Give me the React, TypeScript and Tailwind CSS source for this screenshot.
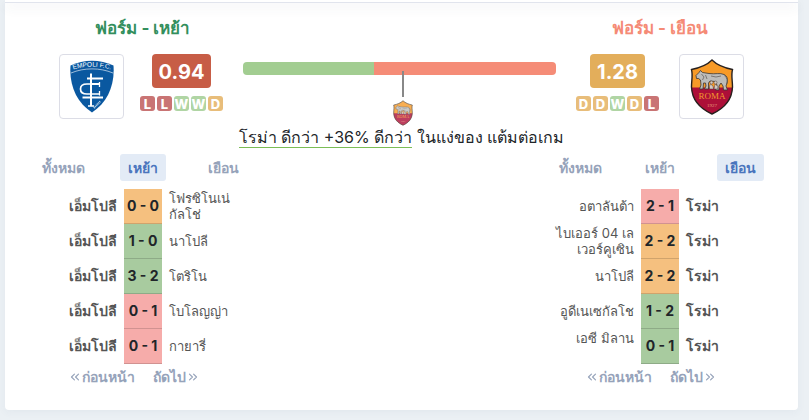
import { ChevronsLeft, ChevronsRight } from "lucide-react";

type Result = "W" | "D" | "L";

type Match = {
  home: string;
  away: string;
  score: string;
  result: Result;
};

const tabs = ["ทั้งหมด", "เหย้า", "เยือน"];

const homeMatches: Match[] = [
  { home: "เอ็มโปลี", away: "โฟรซิโนเน่\nกัลโช่", score: "0 - 0", result: "D" },
  { home: "เอ็มโปลี", away: "นาโปลี", score: "1 - 0", result: "W" },
  { home: "เอ็มโปลี", away: "โตริโน", score: "3 - 2", result: "W" },
  { home: "เอ็มโปลี", away: "โบโลญญ่า", score: "0 - 1", result: "L" },
  { home: "เอ็มโปลี", away: "กายารี่", score: "0 - 1", result: "L" },
];

const awayMatches: Match[] = [
  { home: "อตาลันต้า", away: "โรม่า", score: "2 - 1", result: "L" },
  { home: "ไบเออร์ 04 เล\nเวอร์คูเซิน", away: "โรม่า", score: "2 - 2", result: "D" },
  { home: "นาโปลี", away: "โรม่า", score: "2 - 2", result: "D" },
  { home: "อูดีเนเซกัลโช", away: "โรม่า", score: "1 - 2", result: "W" },
  { home: "เอซี มิลาน\n\u00a0", away: "โรม่า", score: "0 - 1", result: "W" },
];

const badgeColors: Record<Result, string> = {
  W: "bg-[#b0d5a4]",
  D: "bg-[#e8bd7a]",
  L: "bg-[#c97474]",
};

const scoreColors: Record<Result, string> = {
  W: "bg-[#a8cb9f] border-[#8eab87]",
  D: "bg-[#f5c07f] border-[#d0a36c]",
  L: "bg-[#f6acaa] border-[#d19291]",
};

function EmpoliCrest() {
  return (
    <svg viewBox="0 0 44 53" className="h-[53px] w-11" aria-label="Empoli">
      <path
        d="M0.5 5.5C14-1 30-1 43.5 5.5C45 26 37 43 22 52.5C7 43-1 26 0.5 5.5Z"
        fill="#0a58a0"
      />
      <path d="M1 13C14 7.5 30 7.5 43 13" fill="none" stroke="#dce8f3" strokeWidth="0.7" />
      <path id="empoli-arc" d="M2 10C15 5.5 29 5.5 42 10" fill="none" />
      <text fill="#fff" fontSize="6.5" fontFamily="Liberation Sans, sans-serif">
        <textPath href="#empoli-arc" startOffset="50%" textAnchor="middle">
          EMPOLI F.C.
        </textPath>
      </text>
      <g fill="none" stroke="#fff">
        <path d="M21 13.5V46" strokeWidth="2" />
        <path d="M17 18.5H33M21 24H29.5M12.5 37.5H33" strokeWidth="1.8" />
        <path d="M29.5 22V27M29.5 31V35.5M18 46H24" strokeWidth="1.3" />
        <path d="M29.5 24H17Q10.5 24 10.5 29Q10.5 34 17 34H29.5" strokeWidth="1.7" />
      </g>
      <path d="M24 48L30.5 41" stroke="#b7d1e7" strokeWidth="2" strokeDasharray="1 0.6" />
    </svg>
  );
}

function RomaCrest({ className }: { className: string }) {
  return (
    <svg viewBox="0 0 44 56" className={className} aria-label="Roma">
      <path
        d="M22 1C17 6 9 9 1.5 10.5C3 16 1.5 21 1.5 28C2 42 11 50 22 55C33 50 42 42 42.5 28C42.5 21 41 16 42.5 10.5C35 9 27 6 22 1Z"
        fill="#f79a27"
      />
      <path d="M1.5 28.5H42.5C42 42 33 50 22 55C11 50 2 42 1.5 28.5Z" fill="#ad0f38" />
      <path
        d="M22 1C17 6 9 9 1.5 10.5C3 16 1.5 21 1.5 28C2 42 11 50 22 55C33 50 42 42 42.5 28C42.5 21 41 16 42.5 10.5C35 9 27 6 22 1Z"
        fill="none"
        stroke="#28211f"
        strokeWidth="1.4"
      />
      {/* she-wolf */}
      <path
        d="M6 16.5L9 13.5L10.5 11.5L12.5 13.5L19 14.5C25 15.5 30 13.5 34 15.5C37.5 17 38 21 37 24L36 27L37.5 31H33.5L33 27L31 24L29 27V31H25.5L27 26L25 22.5L20 22L18.5 24V30H14.5L16 27L15.5 24L13.5 24L13 30H9.5L11 26L10.5 21L8.5 19.5H6.5Z"
        fill="#bdbcba"
        stroke="#3a3532"
        strokeWidth="0.8"
        strokeLinejoin="round"
      />
      <path
        d="M11.5 15L14 18L12.5 21M15.5 16L17 20M34.5 16.5Q38.5 20 36.5 26M21 17Q26 19 31 17"
        fill="none"
        stroke="#5d5855"
        strokeWidth="0.7"
      />
      {/* twins */}
      <g fill="#d3cac3" stroke="#51413d" strokeWidth="0.5">
        <circle cx="21.5" cy="23.5" r="1.5" />
        <circle cx="25.5" cy="23.5" r="1.5" />
        <path d="M20.5 25L23 27L23.5 30H19.5V27ZM25 25L28 27.5L27.5 30H24Z" />
      </g>
      <text x="22" y="39.5" textAnchor="middle" fontSize="9" fill="#f39a2d" fontFamily="Liberation Serif, serif">
        ROMA
      </text>
      <text x="22" y="47.5" textAnchor="middle" fontSize="5" fill="#e8a07f" fontFamily="Liberation Serif, serif">
        1927
      </text>
    </svg>
  );
}

function CrestBox({ children }: { children: React.ReactNode }) {
  return (
    <div className="flex h-[65px] w-[65px] shrink-0 items-center justify-center rounded border border-[#dcdde6] bg-white">
      {children}
    </div>
  );
}

function PointsPerGame({ value, form, color }: { value: string; form: Result[]; color: string }) {
  return (
    <div className="flex shrink-0 flex-col items-center gap-2">
      <div className={`rounded px-[7px] text-xl leading-[36px] h-[34px] font-bold text-white ${color}`}>{value}</div>
      <div className="flex gap-0.5">
        {form.map((result, i) => (
          <span
            key={i}
            className={`h-[15px] w-[15px] rounded-[3px] text-center text-[13px] leading-[16px] font-extrabold text-white ${badgeColors[result]}`}
          >
            {result}
          </span>
        ))}
      </div>
    </div>
  );
}

function FormTable({ matches, active, side }: { matches: Match[]; active: number; side: "home" | "away" }) {
  const homeText = side === "home" ? "text-sm font-bold" : "text-[13px]";
  const awayText = side === "away" ? "text-sm font-bold" : "text-[13px]";

  return (
    <section className="w-[276px]">
      <div className="mx-auto grid w-60 grid-cols-3 justify-items-center">
        {tabs.map((tab, i) => (
          <button
            key={tab}
            type="button"
            className={
              i === active
                ? "h-[27px] rounded-[3px] bg-[#e3ebf6] px-2 text-sm font-bold text-[#4a75bd]"
                : "h-[27px] px-2 text-sm font-bold text-[#96a3ba]"
            }
          >
            {tab}
          </button>
        ))}
      </div>

      <table className="mt-2 w-full table-fixed border-separate border-spacing-0 text-[#555]">
        <tbody>
          {matches.map((match, i) => (
            <tr key={i} className="h-[35px]">
              <td className={`p-0 px-[7px] pb-0.5 text-right leading-4 whitespace-pre-line ${homeText}`}>
                {match.home}
              </td>
              <td
                className={`w-[38px] border-b p-0 text-center text-sm leading-4 font-bold whitespace-nowrap text-[#212529] ${scoreColors[match.result]}`}
              >
                {match.score}
              </td>
              <td className={`p-0 px-[7px] pb-0.5 leading-4 whitespace-pre-line ${awayText}`}>{match.away}</td>
            </tr>
          ))}
        </tbody>
      </table>

      <div className="mt-[3px] flex justify-center gap-[18px] pr-[18px] text-sm leading-5 font-bold text-[#96a3ba]">
        <button type="button" className="flex items-center">
          <ChevronsLeft className="-ml-0.5 h-3.5 w-3.5" />
          ก่อนหน้า
        </button>
        <button type="button" className="flex items-center">
          ถัดไป
          <ChevronsRight className="-mr-0.5 h-3.5 w-3.5" />
        </button>
      </div>
    </section>
  );
}

export default function App() {
  return (
    <main className="min-h-screen bg-[#ebf0f4] pr-[11px] pb-2.5 pl-[5px] font-[Inter,sans-serif]">
      <div className="relative h-[3px] border-b border-[#e1e4ed] bg-white shadow-[0_4px_12px_rgba(60,70,90,0.12)]" />
      <div className="rounded-b bg-white pb-[23px] shadow-[0_2px_8px_rgba(60,80,110,0.05)]">
        <div className="flex justify-between pt-[13px] text-[17px] leading-6 font-bold">
          <h2 className="w-[276px] text-center text-[#338f5d]">ฟอร์ม - เหย้า</h2>
          <h2 className="w-[276px] text-center text-[#f58b76]">ฟอร์ม - เยือน</h2>
        </div>

        <div className="mt-3.5 flex items-start px-[54px]">
          <CrestBox>
            <EmpoliCrest />
          </CrestBox>
          <div className="ml-4">
            <PointsPerGame value="0.94" form={["L", "L", "W", "W", "D"]} color="bg-[#c75d46]" />
          </div>

          <div className="mx-5 flex-1 pt-2">
            <div className="relative">
              <div className="flex h-[13px] overflow-hidden rounded">
                <div className="w-[42%] bg-[#a2cd91]" />
                <div className="flex-1 bg-[#f58c77]" />
              </div>
              <div className="absolute top-[9px] left-[51%] flex -translate-x-1/2 flex-col items-center">
                <div className="h-[26px] w-0.5 bg-[#888]" />
                <RomaCrest className="mt-[3px] h-[26px] w-5 opacity-80" />
              </div>
            </div>
          </div>

          <div className="mr-5">
            <PointsPerGame value="1.28" form={["D", "D", "W", "D", "L"]} color="bg-[#e3ae5b]" />
          </div>
          <CrestBox>
            <RomaCrest className="h-14 w-11" />
          </CrestBox>
        </div>

        <p className="mt-2 text-center text-base leading-5 text-[#212529]">
          <span className="border-b border-[#7bbd55]">โรม่า ดีกว่า +36% ดีกว่า</span> ในแง่ของ แต้มต่อเกม
        </p>

        <div className="mt-[7px] flex justify-between">
          <FormTable matches={homeMatches} active={1} side="home" />
          <FormTable matches={awayMatches} active={2} side="away" />
        </div>
      </div>
    </main>
  );
}
